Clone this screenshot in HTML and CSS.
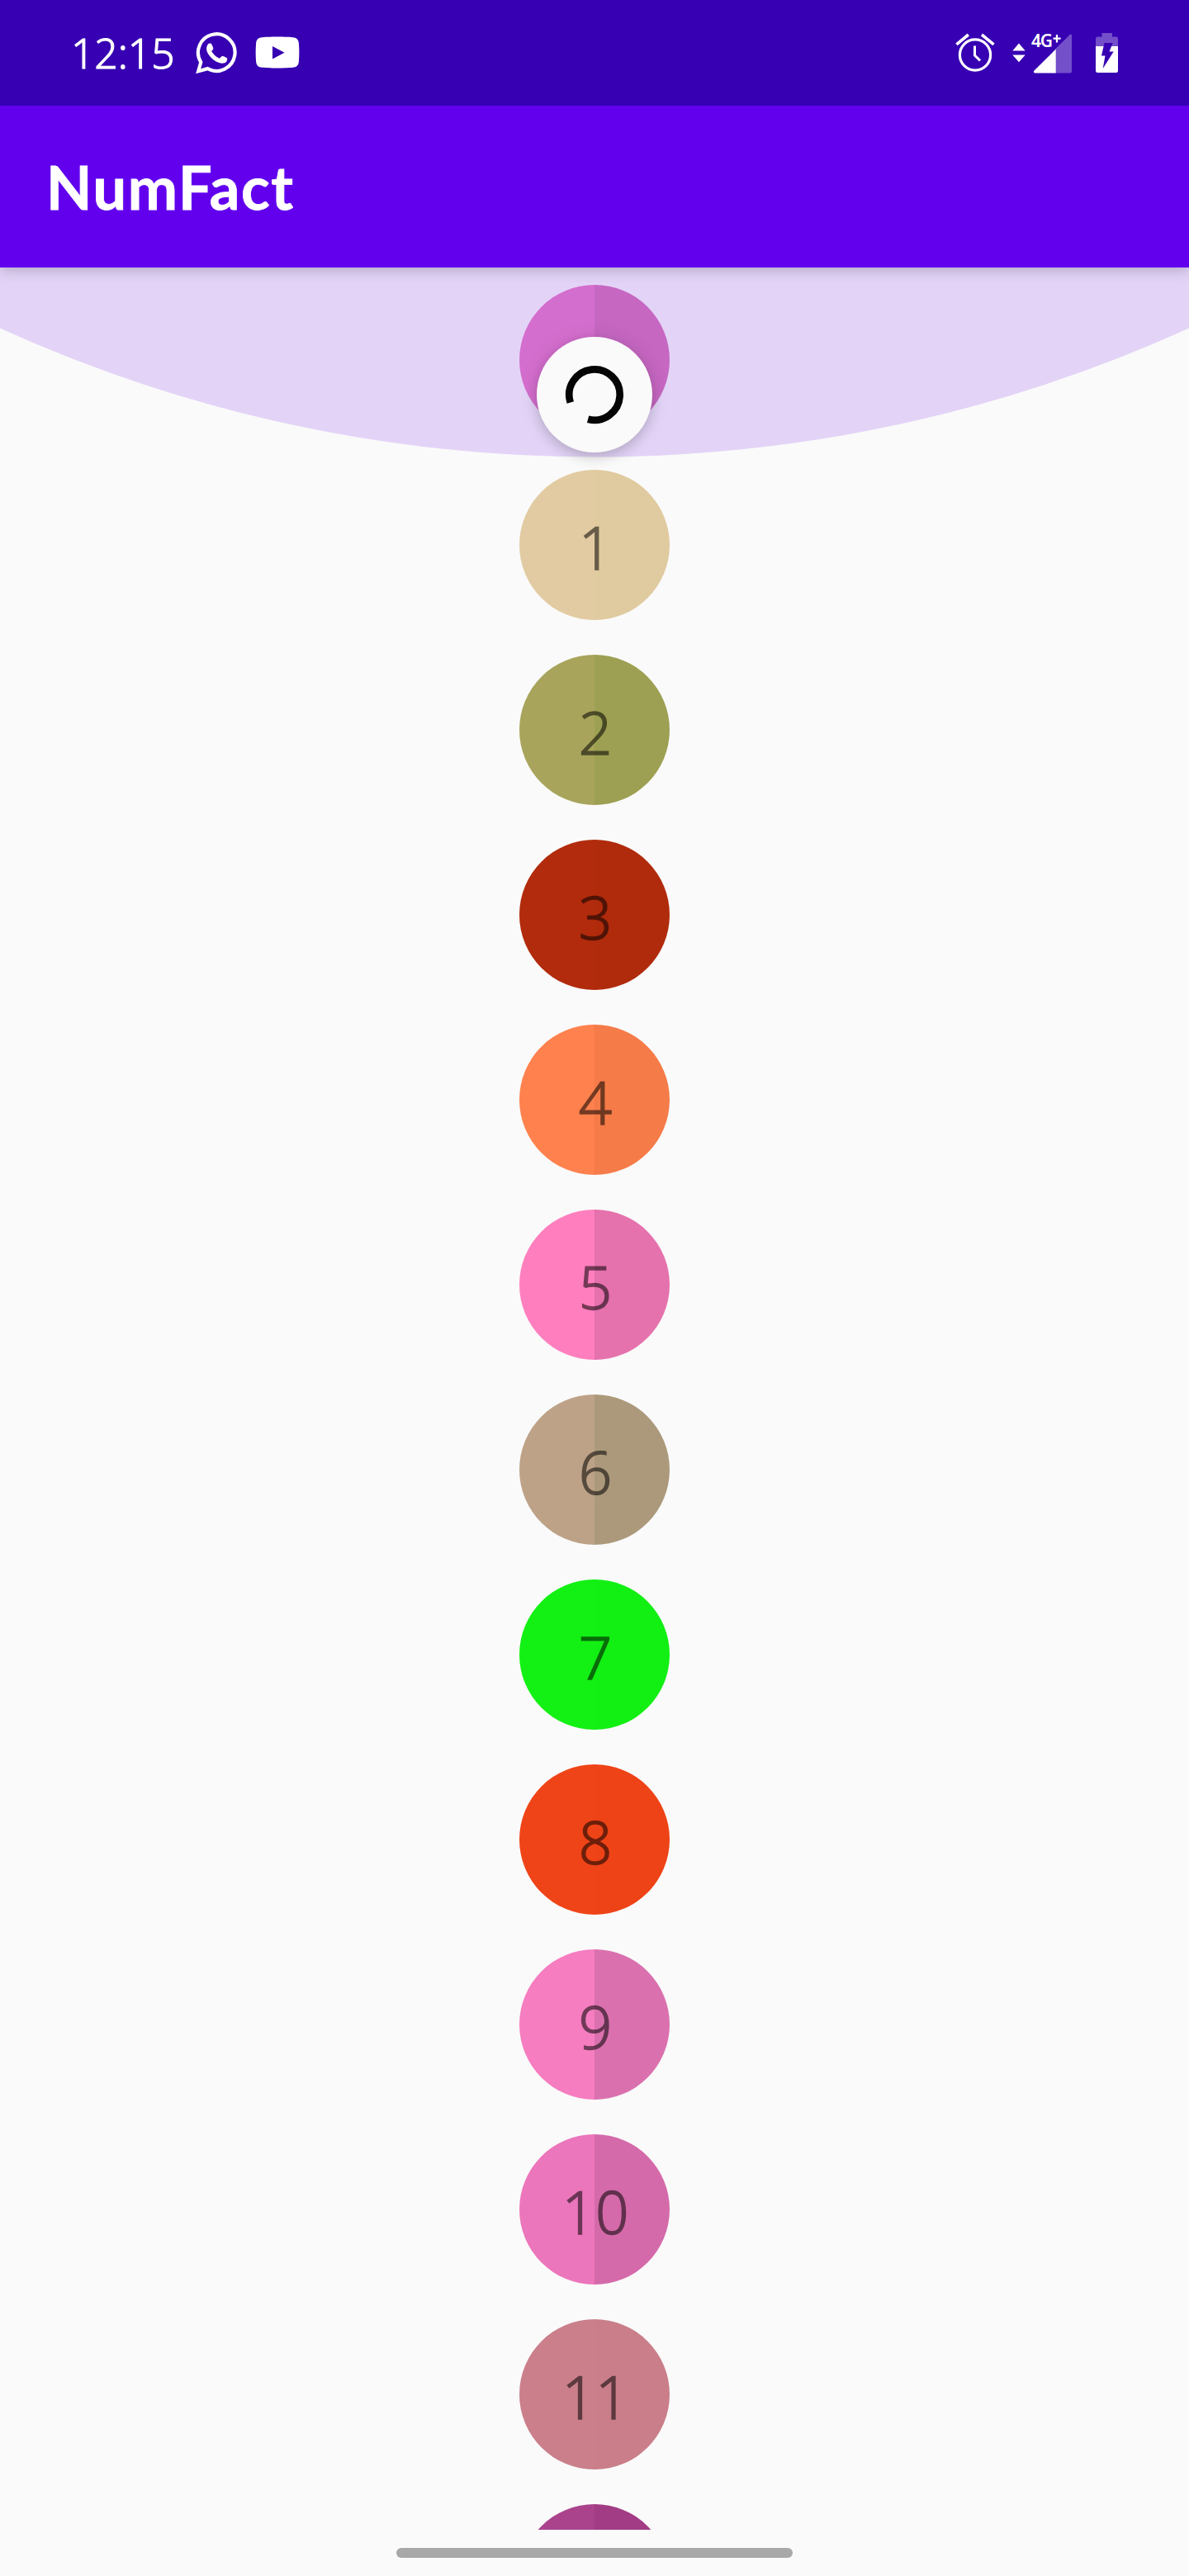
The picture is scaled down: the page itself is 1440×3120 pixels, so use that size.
FILE: index.html
```html
<!DOCTYPE html>
<html lang="en">
<head>
<meta charset="utf-8">
<title>NumFact</title>
<link rel="stylesheet" href="styles.css">
</head>
<body>
<div class="screen">
  <div class="status-bar">
    <span class="clock">12:15</span>
    <svg class="icon-whatsapp" width="50" height="50" viewBox="0 0 50 50">
      <path d="M3.2 47.2 6.3 36.3A22.3 22.3 0 1 1 14.5 44.1Z" fill="none" stroke="#fff" stroke-width="4.2"/>
      <path d="M14.2 15.5c1-2 3-2.4 4.500-1.800 1.200 1.400 1.900 3.600 2.500 5.600.4 1.500-1 2.600-2.100 3.800 2.400 4.200 5.600 6.800 9.800 8.700 1.200-.9 2.100-2.900 3.700-3.100 2.100.8 4.700 1.900 5.600 2.900.2 2.900-1.100 5.400-4.200 6-5.200 1-11.900-2.800-16.100-7.500-4.100-4.500-6.300-9.900-3.700-14.600Z" fill="#fff"/>
    </svg>
    <svg class="icon-youtube" width="54" height="39" viewBox="0 0 54 39">
      <path fill="#fff" fill-rule="evenodd" d="M27 .5c8 0 16 .3 20 1 4 .7 5.500 3 5.900 7 .6 7 .6 15 0 22-.4 4-1.900 6.300-5.900 7-4 .7-12 1-20 1s-16-.3-20-1c-4-.7-5.500-3-5.900-7-.6-7-.6-15 0-22 .4-4 1.900-6.300 5.900-7 4-.7 12-1 20-1ZM21 12v15.500L35.500 19.700Z"/>
    </svg>
    <div class="status-right">
      <svg width="48" height="48" viewBox="0 0 48 48" fill="none" stroke="#fff">
        <circle cx="24" cy="26.500" r="18.600" stroke-width="3.200"/>
        <path d="M23.500 15.500v11.500l6.500 6.300" stroke-width="3"/>
        <path d="M1.400 13.800 15.800 2M32 2l14.500 11.800" stroke-width="3.600"/>
      </svg>
      <svg class="icon-data" width="16" height="24" viewBox="0 0 16 24" fill="#fff">
        <path d="M8 .5 15.700 9.500H.3ZM.3 14.500h15.400L8 23.200Z"/>
      </svg>
      <svg class="icon-signal" width="51" height="50" viewBox="0 0 51 50">
        <path d="M29 19.500 46.500 2.200q2.500-2 2.500 1V46q0 2.500-2.500 2.500H29Z" fill="#744fca"/>
        <path d="M29.700 19.500V48.500H4.500q-2.500-.8-1-3Z" fill="#fff"/>
        <text class="network" x="0" y="17" textLength="26">4G</text>
        <path d="M31 2v9.500M26.600 6.700h9" stroke="#fff" stroke-width="2.300"/>
      </svg>
      <svg class="icon-battery" width="28" height="49" viewBox="0 0 28 49">
        <path d="M0 17V7q0-2.500 2.500-2.500H7.500V0H20v4.500h4.500Q27 4.500 27 7v10Z" fill="#744fca"/>
        <path d="M0 16h27v29.500q0 2.500-2.500 2.500h-22Q0 48 0 45.500Z" fill="#fff"/>
        <path d="M10.500 12h10.200L16.500 22.500h5.200L8.700 43l2.800-15.500H7Z" fill="#3700b3"/>
      </svg>
    </div>
  </div>
  <header class="app-bar"><h1 class="title">NumFact</h1></header>
  <main class="content">
    <svg class="overscroll" width="1440" height="230" viewBox="0 0 1440 230">
      <path d="M0 0H1440V73.500A1739.500 1739.500 0 0 1 0 73.500Z" fill="#e3d4f7"/>
    </svg>
    <ul class="numbers">
      <li class="number c0"></li>
      <li class="number c1"><span class="digits">1</span></li>
      <li class="number c2"><span class="digits">2</span></li>
      <li class="number c3"><span class="digits">3</span></li>
      <li class="number c4"><span class="digits">4</span></li>
      <li class="number c5"><span class="digits">5</span></li>
      <li class="number c6"><span class="digits">6</span></li>
      <li class="number c7"><span class="digits">7</span></li>
      <li class="number c8"><span class="digits">8</span></li>
      <li class="number c9"><span class="digits">9</span></li>
      <li class="number c10"><span class="digits">10</span></li>
      <li class="number c11"><span class="digits">11</span></li>
      <li class="number c12"></li>
    </ul>
    <div class="refresh">
      <svg width="80" height="80" viewBox="-40 -40 80 80">
        <path d="M-29.200 9.500A30.700 30.700 0 1 1-7.900 29.700" fill="none" stroke="#050505" stroke-width="8.700"/>
      </svg>
    </div>
  </main>
  <nav class="gesture-bar"><div class="handle"></div></nav>
</div>
</body>
</html>
```
FILE: styles.css
```css
* { box-sizing: border-box; }
body { margin: 0; background: #fafafa; font-family: "Noto Sans", sans-serif; }
.screen { width: 1440px; height: 3120px; display: flex; flex-direction: column; overflow: hidden; }

.status-bar { flex: none; height: 128px; background: #3700b3; color: #fff; display: flex; align-items: flex-start; padding: 0 85px 0 86px; position: relative; z-index: 2; }
.clock { font-size: 49.7px; line-height: 68px; font-weight: 300; -webkit-text-stroke: 1px #fff; margin-top: 30px; width: 151px; }
.icon-whatsapp { margin-top: 39px; }
.icon-youtube { margin: 44px 0 0 22px; }
.status-right { display: flex; margin-left: auto; padding-top: 40px; }
.icon-data { margin: 12px 0 0 21px; }
.icon-signal { margin-left: 7px; overflow: visible; }
.network { font: 600 21px "Noto Sans", sans-serif; fill: #fff; }
.icon-battery { margin-left: 27px; }

.app-bar { flex: none; height: 196px; background: #6200ee; color: #fff; display: flex; align-items: center; padding-left: 56px; position: relative; z-index: 1; box-shadow: 0 3px 16px rgba(0, 0, 0, .22); }
.title { margin: 0; font: 700 72px/86px Lato, sans-serif; letter-spacing: 1.7px; -webkit-text-stroke: .8px #fff; }

.content { flex: none; height: 2740px; position: relative; overflow: hidden; }
.overscroll { position: absolute; top: 0; left: 0; }
.numbers { position: relative; list-style: none; margin: 0; padding: 21px 0 0; display: flex; flex-direction: column; align-items: center; gap: 42px; }
.number { flex: none; width: 182px; height: 182px; border-radius: 50%; padding: 4px 0 0 2px; display: flex; align-items: center; justify-content: center; background: linear-gradient(to right, var(--left) 50%, var(--right) 50%); }
.digits { font-size: 71px; font-weight: 300; color: #000; -webkit-text-stroke: 1.3px #000; opacity: .54; }
.c0 { --left: #d46ece; --right: #c667c2; }
.c1 { --left: #e2cba2; --right: #e0ca9f; }
.c2 { --left: #a8a45b; --right: #9da052; }
.c3 { --left: #b12b0c; --right: #b02b0c; }
.c4 { --left: #ff814d; --right: #f57b48; }
.c5 { --left: #ff7fbe; --right: #e571ad; }
.c6 { --left: #bda287; --right: #ac997b; }
.c7 { --left: #13f014; --right: #12ef13; }
.c8 { --left: #ef4417; --right: #ee4317; }
.c9 { --left: #f57dc0; --right: #da71ae; }
.c10 { --left: #eb76bb; --right: #d46aaa; }
.c11 { --left: #ca7f8b; --right: #c97e8a; }
.c12 { --left: #aa428c; --right: #a23c84; }

.refresh { position: absolute; left: 650px; top: 84px; width: 140px; height: 140px; border-radius: 50%; background: #fafafa; display: flex; align-items: center; justify-content: center; box-shadow: 0 6px 14px rgba(0, 0, 0, .15), 0 0 24px rgba(0, 0, 0, .09); }

.gesture-bar { flex: 1; display: flex; justify-content: center; padding-top: 22px; }
.handle { width: 480px; height: 12px; border-radius: 6px; background: #a8a8a8; }
```
